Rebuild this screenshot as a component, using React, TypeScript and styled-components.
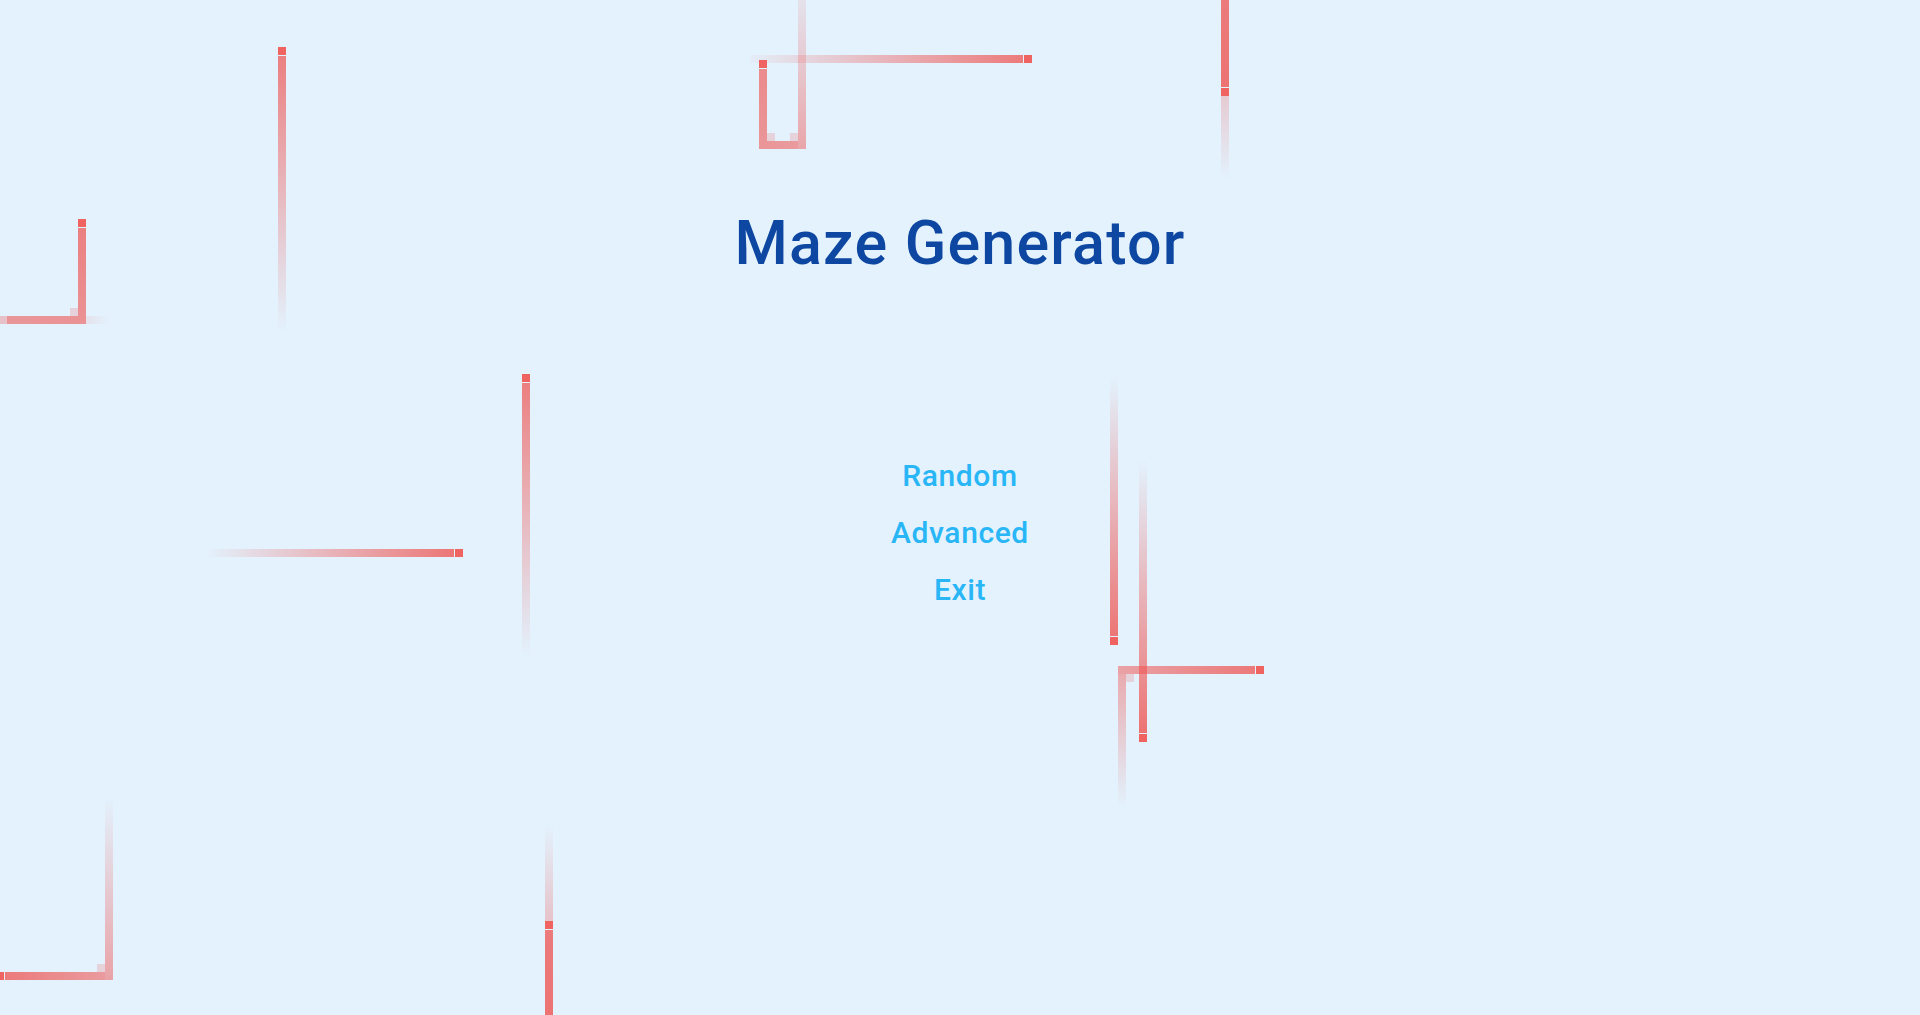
import styled, { createGlobalStyle } from "styled-components";

const GlobalStyle = createGlobalStyle`
  html, body {
    margin: 0;
    padding: 0;
    background: #e3f2fd;
  }
  body {
    font-family: Roboto, "Noto Sans", "Liberation Sans", sans-serif;
  }
`;

const Screen = styled.div`
  position: relative;
  width: 100%;
  height: 100vh;
  overflow: hidden;
  background: #e3f2fd;
`;

// decorative snake trails drawn behind the menu
const TrailLayer = styled.svg`
  position: absolute;
  inset: 0;
  width: 100%;
  height: 100%;
  pointer-events: none;
`;

const Content = styled.main`
  position: relative;
  display: flex;
  flex-direction: column;
  align-items: center;
  padding-top: 207px;
`;

const Title = styled.h1`
  margin: 0;
  font-size: 61px;
  line-height: 72px;
  font-weight: 500;
  color: #0d47a1;
  letter-spacing: 1.2px;
`;

const Menu = styled.nav`
  display: flex;
  flex-direction: column;
  align-items: center;
  margin-top: 168px;
`;

const MenuItem = styled.button`
  border: 0;
  background: none;
  padding: 0;
  font-family: inherit;
  font-size: 30px;
  line-height: 57px;
  font-weight: 500;
  letter-spacing: 0.6px;
  color: #29b6f6;
  cursor: pointer;
`;

type Seg = { x: number; y: number; w: number; h: number; a1: number; a2?: number };

const RED = "#ef5350";

// a1 -> a2 runs left-to-right for wide pieces, top-to-bottom for tall ones
const segments: Seg[] = [
  // A
  { x: 278, y: 47, w: 8, h: 8, a1: 0.9 },
  { x: 278, y: 56, w: 8, h: 277, a1: 0.72, a2: 0 },
  // B
  { x: 78, y: 219, w: 8, h: 8, a1: 0.9 },
  { x: 78, y: 228, w: 8, h: 96, a1: 0.72, a2: 0.6 },
  { x: 0, y: 316, w: 7, h: 8, a1: 0.3 },
  { x: 7, y: 316, w: 71, h: 8, a1: 0.58, a2: 0.6 },
  { x: 86, y: 316, w: 24, h: 8, a1: 0.1, a2: 0 },
  { x: 70, y: 308, w: 8, h: 8, a1: 0.2 },
  // C
  { x: 759, y: 60, w: 8, h: 8, a1: 0.9 },
  { x: 759, y: 69, w: 8, h: 80, a1: 0.65, a2: 0.58 },
  { x: 767, y: 141, w: 31, h: 8, a1: 0.58, a2: 0.55 },
  { x: 798, y: 0, w: 8, h: 149, a1: 0.1, a2: 0.48 },
  { x: 767, y: 133, w: 8, h: 8, a1: 0.2 },
  { x: 790, y: 133, w: 8, h: 8, a1: 0.2 },
  { x: 750, y: 55, w: 273, h: 8, a1: 0.03, a2: 0.75 },
  { x: 1024, y: 55, w: 8, h: 8, a1: 0.9 },
  // D
  { x: 1221, y: 0, w: 8, h: 87, a1: 0.75, a2: 0.8 },
  { x: 1221, y: 88, w: 8, h: 8, a1: 0.9 },
  { x: 1221, y: 96, w: 8, h: 84, a1: 0.25, a2: 0 },
  // E
  { x: 205, y: 549, w: 249, h: 8, a1: 0, a2: 0.78 },
  { x: 455, y: 549, w: 8, h: 8, a1: 0.9 },
  // F
  { x: 522, y: 374, w: 8, h: 8, a1: 0.9 },
  { x: 522, y: 383, w: 8, h: 274, a1: 0.72, a2: 0 },
  // G
  { x: 0, y: 972, w: 4, h: 8, a1: 0.9 },
  { x: 5, y: 972, w: 100, h: 8, a1: 0.75, a2: 0.55 },
  { x: 105, y: 797, w: 8, h: 183, a1: 0, a2: 0.5 },
  { x: 97, y: 964, w: 8, h: 8, a1: 0.2 },
  // H
  { x: 545, y: 825, w: 8, h: 96, a1: 0, a2: 0.3 },
  { x: 545, y: 921, w: 8, h: 8, a1: 0.9 },
  { x: 545, y: 930, w: 8, h: 85, a1: 0.75, a2: 0.8 },
  // I
  { x: 1110, y: 377, w: 8, h: 259, a1: 0, a2: 0.78 },
  { x: 1110, y: 637, w: 8, h: 8, a1: 0.9 },
  // K
  { x: 1118, y: 666, w: 137, h: 8, a1: 0.5, a2: 0.76 },
  { x: 1256, y: 666, w: 8, h: 8, a1: 0.9 },
  { x: 1118, y: 674, w: 8, h: 133, a1: 0.45, a2: 0 },
  { x: 1126, y: 674, w: 8, h: 8, a1: 0.2 },
  // J
  { x: 1139, y: 460, w: 8, h: 273, a1: 0, a2: 0.8 },
  { x: 1139, y: 734, w: 8, h: 8, a1: 0.9 },
];

function Trails() {
  return (
    <TrailLayer viewBox="0 0 1920 1015" preserveAspectRatio="xMinYMin slice">
      <defs>
        {segments.map((s, i) =>
          s.a2 === undefined ? null : (
            <linearGradient
              key={i}
              id={`seg${i}`}
              x1="0"
              y1="0"
              x2={s.w > s.h ? "1" : "0"}
              y2={s.w > s.h ? "0" : "1"}
            >
              <stop offset="0" stopColor={RED} stopOpacity={s.a1} />
              <stop offset="1" stopColor={RED} stopOpacity={s.a2} />
            </linearGradient>
          )
        )}
      </defs>
      {segments.map((s, i) => (
        <rect
          key={i}
          x={s.x}
          y={s.y}
          width={s.w}
          height={s.h}
          fill={s.a2 === undefined ? RED : `url(#seg${i})`}
          fillOpacity={s.a2 === undefined ? s.a1 : 1}
        />
      ))}
    </TrailLayer>
  );
}

export default function App() {
  return (
    <>
      <GlobalStyle />
      <Screen>
        <Trails />
        <Content>
          <Title>Maze Generator</Title>
          <Menu>
            <MenuItem>Random</MenuItem>
            <MenuItem>Advanced</MenuItem>
            <MenuItem>Exit</MenuItem>
          </Menu>
        </Content>
      </Screen>
    </>
  );
}
